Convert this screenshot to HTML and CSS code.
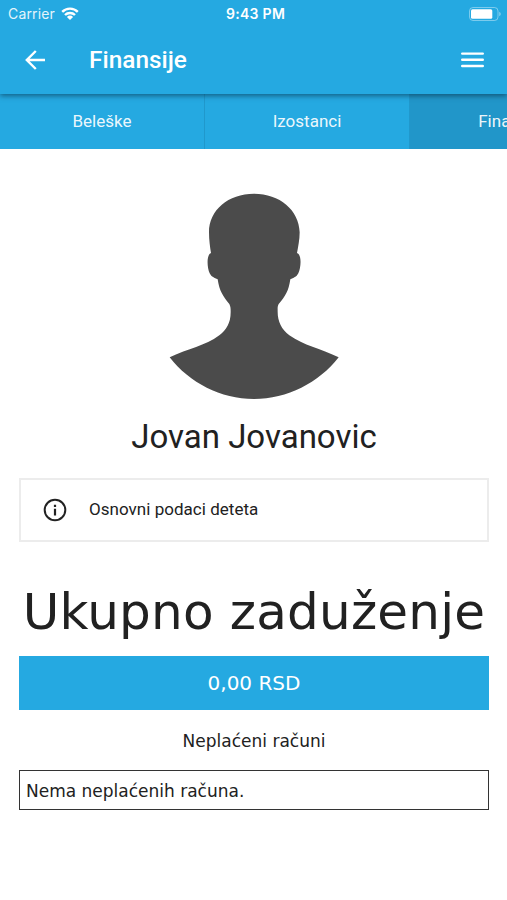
FILE: index.html
```html
<!DOCTYPE html>
<html lang="sr-Latn">
<head>
<meta charset="utf-8">
<title>Finansije</title>
<link rel="stylesheet" href="styles.css">
</head>
<body>
<header class="top">
  <div class="status">
    <div class="carrier"><span class="carrier-name">Carrier</span>
      <svg class="wifi" width="18" height="14" viewBox="0 0 18 14"><g fill="none" stroke="#fff" stroke-width="2.4"><path d="M1.2 4.9a11 11 0 0 1 15.6 0"/><path d="M4 8a7.1 7.1 0 0 1 10 0"/></g><path d="M9 13 5.9 9.9a4.4 4.4 0 0 1 6.2 0z" fill="#fff"/></svg>
    </div>
    <div class="clock">9:43 PM</div>
    <svg class="battery" width="32" height="14" viewBox="0 0 32 14"><rect x=".5" y=".5" width="28.5" height="13" rx="3.5" fill="none" stroke="#fff" stroke-opacity=".4"/><rect x="2" y="2.2" width="21.3" height="9.6" rx="1.5" fill="#fff"/><path d="M30.3 4.7q1.4.8 1.4 2.3t-1.4 2.3z" fill="#fff" fill-opacity=".5"/></svg>
  </div>
  <div class="bar">
    <svg class="back" width="20" height="20" viewBox="0 0 20 20"><path d="M20 10H2M10.8 1 1.8 10l9 9" fill="none" stroke="#fff" stroke-width="2.4"/></svg>
    <h1 class="title">Finansije</h1>
    <svg class="menu" width="23" height="16" viewBox="0 0 23 16"><path d="M1.2 1.6h20.6M1.2 7.8h20.6M1.2 14h20.6" stroke="#fff" stroke-width="2.4" stroke-linecap="round"/></svg>
  </div>
</header>
<nav class="tabs">
  <div class="tab">Beleške</div>
  <div class="tab">Izostanci</div>
  <div class="tab active">Finansije</div>
</nav>
<main class="content">
  <svg class="avatar" width="210" height="230" viewBox="0 0 630 690"><path fill="#4b4b4b" d="M312 41C235 41 177 90 177 157C177 180 180 202 183 219C169 224 171 263 179 280C185 292 193 293 203 298C208 333 219 349 238 372C242 380 242 386 242 396C242 430 229 449 208 466C165 498 115 505 59 532C119 609 212 657 312 657C412 657 506 609 566 532C510 505 462 497 418 466C395 449 383 424 383 396C383 386 382 380 386 372C406 349 416 333 421 298C431 293 439 292 445 280C453 263 456 224 441 219C444 202 449 180 449 157C447 90 389 41 312 41Z"/></svg>
  <h2 class="name">Jovan Jovanovic</h2>
  <div class="card">
    <svg class="info" width="24" height="24" viewBox="0 0 24 24"><circle cx="12" cy="12" r="10.3" fill="none" stroke="#222" stroke-width="2"/><path d="M12 10.8v6.6M12 6.7v2.2" stroke="#222" stroke-width="2.2"/></svg>
    <span class="card-label">Osnovni podaci deteta</span>
  </div>
  <h2 class="debt">Ukupno zaduženje</h2>
  <div class="amount"><span>0,00 RSD</span></div>
  <div class="subtitle"><span>Neplaćeni računi</span></div>
  <div class="empty"><span>Nema neplaćenih računa.</span></div>
</main>
</body>
</html>
```
FILE: styles.css
```css
* { box-sizing: border-box; }
body { margin: 0; height: 900px; overflow: hidden; background: #fff; color: #212121; font-family: Roboto, sans-serif; }
svg { display: block; flex: none; }
h1, h2 { margin: 0; font-weight: 400; }
.top { position: relative; z-index: 1; height: 94px; background: #25a9e1; color: #fff; box-shadow: 0 2px 5px rgba(0, 30, 50, .5); }
.status { display: grid; grid-template-columns: 1fr auto 1fr; align-items: center; height: 27px; padding: 0 6px 0 8px; font-family: Inter, sans-serif; font-size: 14px; line-height: 27px; }
.carrier { display: flex; align-items: center; gap: 6px; letter-spacing: .15px; }
.carrier-name { opacity: .88; }
.clock { padding-left: 2px; font-weight: 600; letter-spacing: .3px; }
.battery { justify-self: end; }
.bar { display: flex; align-items: center; height: 66px; padding: 0 23px 0 25px; }
.title { flex: 1; margin-left: 44px; font-size: 24.4px; font-weight: 500; line-height: 66px; }
.tabs { display: flex; height: 54.5px; overflow: hidden; background: #25a9e1; color: rgba(255, 255, 255, .93); }
.tab { flex: 0 0 205px; border-right: 1px solid #2098cc; text-align: center; font-size: 17px; line-height: 54px; }
.active { background: #2196c9; }
.content { display: flex; flex-direction: column; padding: 31.5px 18px 0 19px; }
.avatar { margin-left: 131px; }
.name { margin-top: 4px; text-align: center; font-size: 33px; line-height: 46px; }
.card { display: flex; align-items: center; gap: 22px; height: 64px; margin-top: 18px; padding-left: 22px; border: 2px solid #ececec; }
.card-label { padding-bottom: 2px; font-size: 17px; letter-spacing: .03px; }
.debt, .amount, .subtitle, .empty { font-family: "DejaVu Sans", sans-serif; white-space: nowrap; }
.debt { height: 76px; margin-top: 32px; text-align: center; font-size: 50px; line-height: 76px; letter-spacing: .2px; }
.amount { height: 54px; margin-top: 6px; background: #25a9e1; color: #fff; text-align: center; font-size: 20px; line-height: 55px; }
.subtitle { height: 60px; text-align: center; font-size: 17px; line-height: 62px; }
.empty { height: 40px; padding-left: 6px; border: 1px solid #333; font-size: 17px; line-height: 40px; }
```
